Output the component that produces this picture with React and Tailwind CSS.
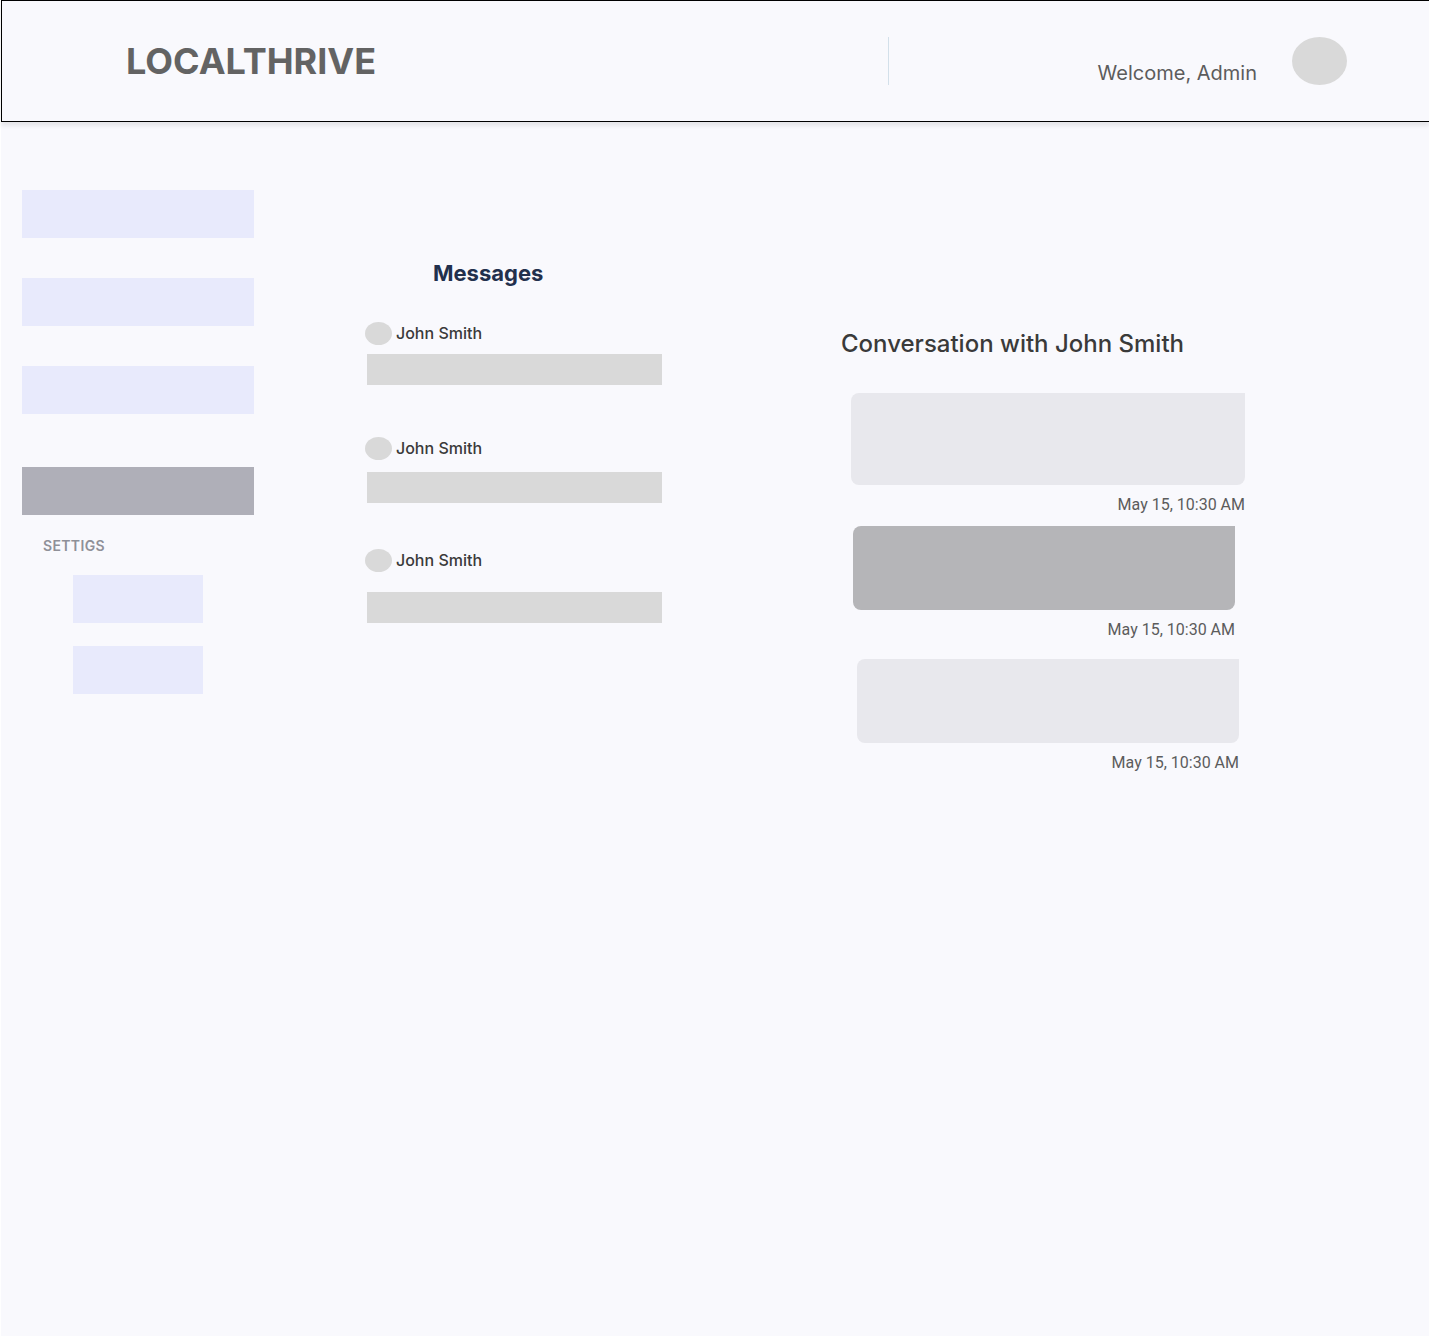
const navItems = ["Dashboard", "Businesses", "Reviews"];

const messages = [
  { id: 1, name: "John Smith", row: "", bar: "mt-[9px]" },
  { id: 2, name: "John Smith", row: "mt-[52px]", bar: "mt-3" },
  { id: 3, name: "John Smith", row: "mt-[46px]", bar: "mt-5" },
];

const bubbles = [
  { id: 1, time: "May 15, 10:30 AM", row: "mt-[33px] ml-[10px]", box: "h-[92px] bg-[#e8e8ed]" },
  { id: 2, time: "May 15, 10:30 AM", row: "mt-[9px] mr-[10px] ml-3", box: "h-[84px] bg-[#b5b5b8]" },
  { id: 3, time: "May 15, 10:30 AM", row: "mt-[17px] mr-[6px] ml-4", box: "h-[84px] bg-[#e8e8ed]" },
];

function Header() {
  return (
    <header className="flex h-[122px] items-center border-y border-l border-black pr-[82px] pl-[124px] shadow-[0_4px_4px_rgba(0,0,0,0.08)]">
      <div className="text-4xl font-bold text-[#636363]">LOCALTHRIVE</div>
      <div className="ml-auto flex h-12 w-[459px] shrink-0 items-start justify-end border-l border-[#d3e0ea]">
        <p className="mt-[22px] mr-[35px] text-xl text-[#5c5c5c]">Welcome, Admin</p>
        <button aria-label="Account" className="h-12 w-[55px] rounded-[50%] bg-[#d9d9d9]" />
      </div>
    </header>
  );
}

function Sidebar() {
  return (
    <nav className="ml-[21px] w-[232px] shrink-0 pt-[68px]">
      <div className="flex flex-col gap-10">
        {navItems.map((item) => (
          <button key={item} aria-label={item} className="h-12 w-full bg-[#e8eafc]" />
        ))}
      </div>
      <button aria-label="Messages" aria-current="page" className="mt-[53px] block h-12 w-full bg-[#afafb8]" />
      <h2 className="mt-[21px] ml-[21px] text-sm font-semibold tracking-wide text-[#8f9098]">SETTIGS</h2>
      <div className="mt-[19px] ml-[51px] flex flex-col gap-[23px]">
        <button aria-label="Profile" className="h-12 w-[130px] bg-[#e8eafc]" />
        <button aria-label="Preferences" className="h-12 w-[130px] bg-[#e8eafc]" />
      </div>
    </nav>
  );
}

function MessageList() {
  return (
    <section className="pt-[135px]">
      <h1 className="mb-[33px] ml-[68px] text-[22px] leading-8 font-bold text-[#22304d]">Messages</h1>
      {messages.map((m) => (
        <article key={m.id} className={m.row}>
          <div className="flex h-[23px] items-center gap-1">
            <span className="h-[23px] w-[27px] rounded-[50%] bg-[#d9d9d9]" />
            <span className="text-base leading-[23px] font-medium text-[#3a3a3a]">{m.name}</span>
          </div>
          <div className={`ml-[2px] h-[31px] bg-[#d9d9d9] ${m.bar}`} />
        </article>
      ))}
    </section>
  );
}

function Conversation() {
  return (
    <section className="pt-[206px]">
      <h2 className="text-2xl font-medium text-[#3a3a3a]">Conversation with John Smith</h2>
      {bubbles.map((b) => (
        <article key={b.id} className={b.row}>
          <div className={`rounded-lg rounded-tr-none ${b.box}`} />
          <time className="mt-2 block text-right font-[Roboto,sans-serif] text-base text-[#5c5c5c]">{b.time}</time>
        </article>
      ))}
    </section>
  );
}

export default function App() {
  return (
    <div className="min-h-screen bg-white pl-px font-[Inter,sans-serif]">
      <div className="min-h-screen bg-[#f9f9fd]">
        <Header />
        <div className="flex">
          <Sidebar />
          <main className="grid min-w-0 flex-1 grid-cols-[297fr_404fr] gap-x-[179px] pr-[184px] pl-[111px]">
            <MessageList />
            <Conversation />
          </main>
        </div>
      </div>
    </div>
  );
}
